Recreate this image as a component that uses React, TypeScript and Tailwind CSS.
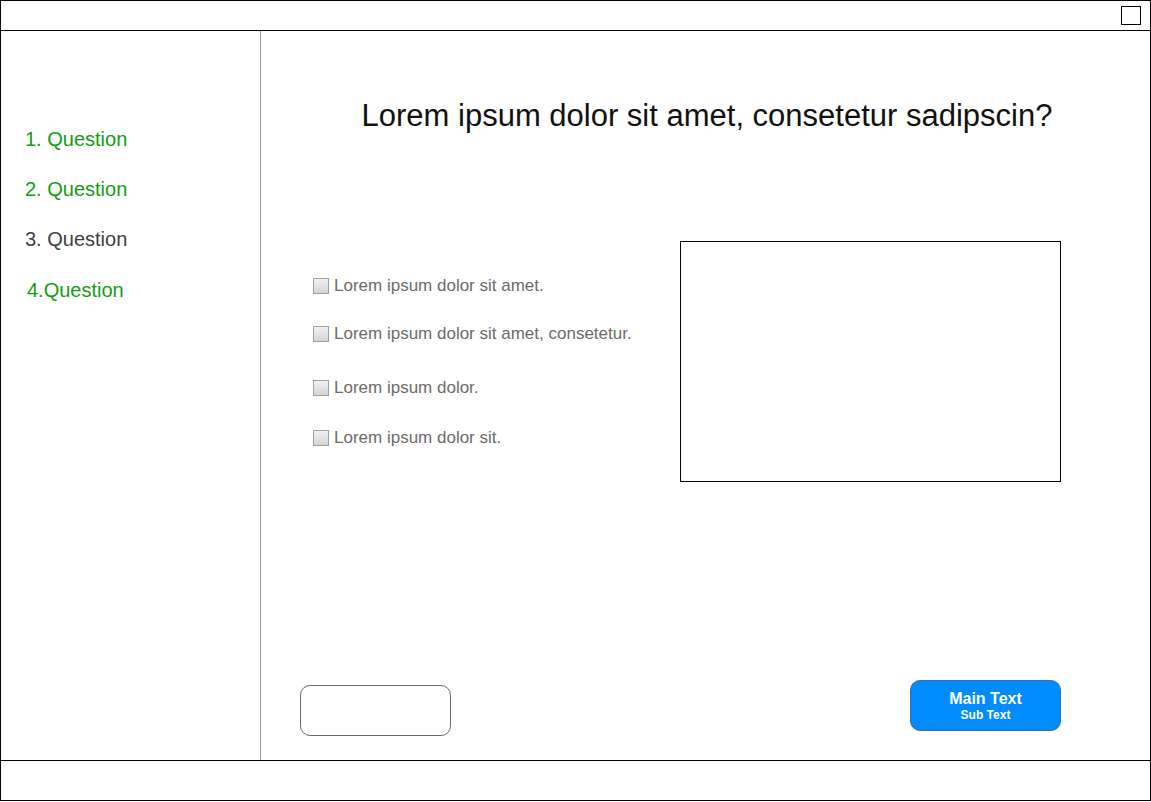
import React from "react";

const Check = ({ label, top }: { label: string; top: string }) => (
  <div className={`flex items-center h-[20px] ${top}`}>
    <div className="w-[16px] h-[16px] border border-[#a0a0a0] bg-gradient-to-b from-[#f2f2f2] to-[#d4d4d4] mr-[5px] shrink-0" />
    <span className="text-[17px] leading-[20px] text-[#6b6b6b] whitespace-nowrap">{label}</span>
  </div>
);

export default function App() {
  return (
    <div
      className="w-[1151px] h-[802px] bg-white"
      style={{ fontFamily: '"Liberation Sans", Arial, sans-serif' }}
    >
      <div className="w-[1151px] h-[801px] border border-black flex flex-col">
        <div className="h-[30px] border-b border-black flex justify-end items-start pt-[5px] pr-[9px] shrink-0">
          <div className="w-[20px] h-[19px] border border-black" />
        </div>
        <div className="flex flex-1 min-h-0">
          <div className="w-[260px] border-r border-[#9a9a9a] shrink-0 flex flex-col pt-[95px] pl-[24px]">
            <div className="h-[26px] leading-[26px] text-[20px] text-[#149c14]">1. Question</div>
            <div className="h-[26px] leading-[26px] text-[20px] text-[#149c14] mt-[24px]">2. Question</div>
            <div className="h-[26px] leading-[26px] text-[20px] text-[#404040] mt-[24px]">3. Question</div>
            <div className="h-[26px] leading-[26px] text-[20px] text-[#149c14] mt-[25px] pl-[2px]">4.Question</div>
          </div>
          <div className="flex-1 flex flex-col">
            <div className="pt-[67px] h-[103px] flex justify-center pl-[3px]">
              <h1 className="text-[31px] leading-[36px] text-[#111] whitespace-nowrap">
                Lorem ipsum dolor sit amet, consetetur sadipscin?
              </h1>
            </div>
            <div className="flex mt-[107px]">
              <div className="flex flex-col pl-[52px] pt-[35px]">
                <Check label="Lorem ipsum dolor sit amet." top="" />
                <Check label="Lorem ipsum dolor sit amet, consetetur." top="mt-[28px]" />
                <Check label="Lorem ipsum dolor." top="mt-[34px]" />
                <Check label="Lorem ipsum dolor sit." top="mt-[30px]" />
              </div>
              <div className="ml-auto mr-[89px] w-[381px] h-[241px] border border-black" />
            </div>
            <div className="mt-auto flex items-end justify-between pl-[39px] pr-[89px]">
              <div className="w-[151px] h-[51px] rounded-[10px] border border-[#6a6a6a] mb-[24px]" />
              <div className="w-[151px] h-[51px] rounded-[10px] border border-[#3b6fa8] bg-[#008cff] mb-[29px] flex flex-col items-center justify-center text-white font-bold">
                <div className="text-[16px] leading-[18px]">Main Text</div>
                <div className="text-[12px] leading-[14px]">Sub Text</div>
              </div>
            </div>
          </div>
        </div>
        <div className="h-[40px] border-t border-black shrink-0" />
      </div>
    </div>
  );
}
